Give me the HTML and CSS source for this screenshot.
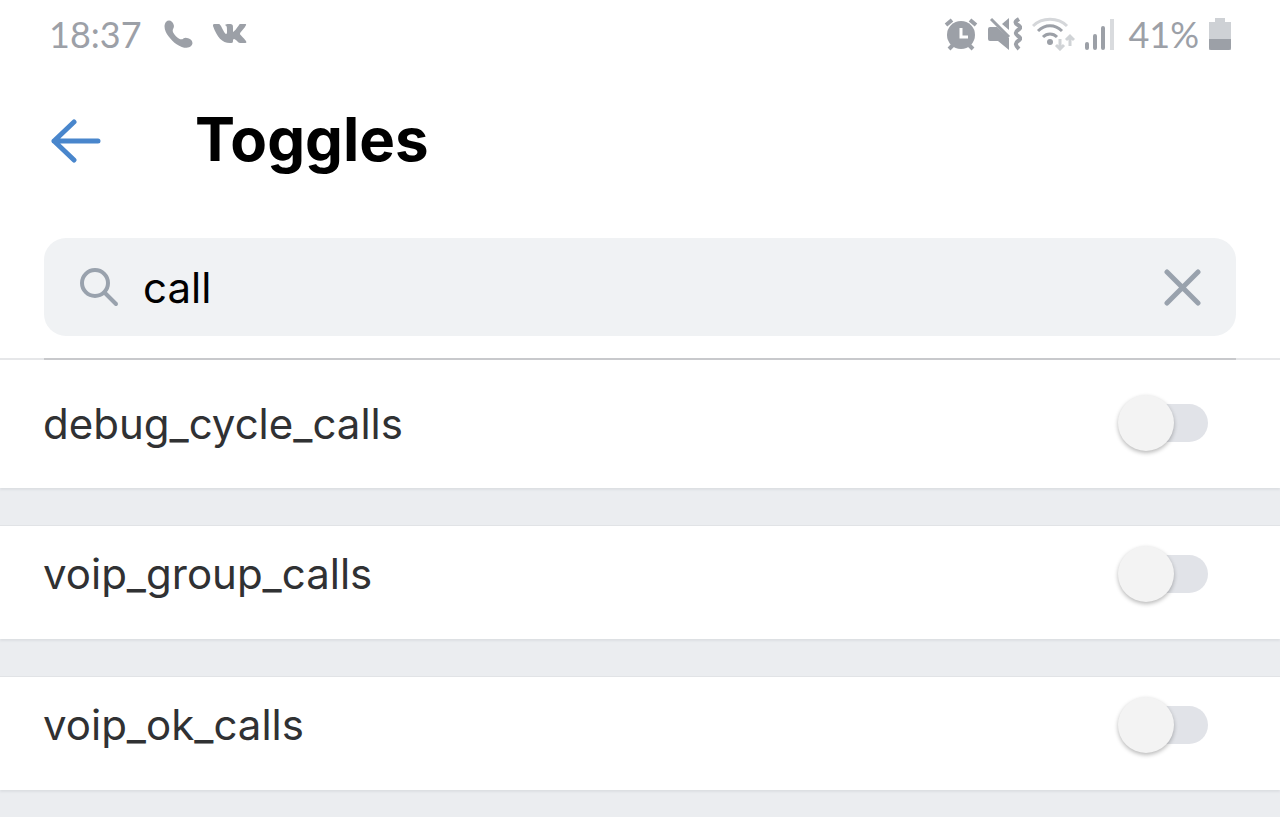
FILE: index.html
```html
<!DOCTYPE html>
<html lang="en">
<head>
  <meta charset="UTF-8">
  <meta name="viewport" content="width=device-width, initial-scale=1">
  <title>Toggles</title>
  <link rel="stylesheet" href="styles.css">
</head>
<body>
  <div class="status-bar">
    <div class="status-left">
      <span class="clock">18:37</span>
      <svg class="icon-phone" width="29" height="29" viewBox="0 0 30 30">
        <path d="M2 2C5-1 9 1 10 5c1 3-1 4-1 6 0 3 6 9 9 9 2 0 3-3 7-1 4 1 6 5 3 8-3 3-9 2-15-2C6 20-3 9 2 2z" fill="currentColor"/>
      </svg>
      <svg class="icon-vk" width="34" height="20" viewBox="0 0 34 20">
        <path d="M1 0h5c1 0 1 1 2 2 2 4 4 8 5 8 1 0 1-1 1-3 0-4 0-5-2-6 1-1 2-1 4-1 4 0 4 1 4 4v4c1 0 4-4 6-7 0-1 1-1 2-1h4c2 0 1 1 0 3-2 3-5 5-5 7 0 1 4 4 6 7 1 2 0 2-2 2h-4c-2 0-4-4-6-4-1 0-1 1-1 2 0 2-1 2-3 2C9 19 4 13 0 2c0-1 0-2 1-2z" fill="currentColor"/>
      </svg>
    </div>
    <div class="status-right">
      <svg width="34" height="34" viewBox="0 0 34 34">
        <circle cx="17" cy="18" r="14" fill="currentColor"/>
        <path d="M2 8l6-5M32 8l-6-5M5 32l5-5M29 32l-5-5" fill="none" stroke="currentColor" stroke-width="4"/>
        <path d="M17 11v9h7" fill="none" stroke="#fff" stroke-width="3"/>
      </svg>
      <svg width="34" height="34" viewBox="0 0 34 34">
        <path d="M0 12q0-2 2-2h7l12 11v12l-11-9H2q-2 0-2-2z" fill="currentColor"/>
        <path d="M3 2l18 18" stroke="currentColor" stroke-width="3"/>
        <path d="M21 1v12l-7-6z" fill="currentColor"/>
        <path d="M31 2c-5 3-4 4-1 6s3 3 0 5-3 4 0 6 3 3 0 5-3 4 1 8" fill="none" stroke="currentColor" stroke-width="4"/>
      </svg>
      <svg width="43" height="34" viewBox="0 0 43 34">
        <path d="M1 9C10 0 26 0 35 9" fill="none" stroke="#d5d7da" stroke-width="3"/>
        <path d="M6 14c7-7 17-7 24 0M11 20c4-4 10-4 14 0" fill="none" stroke="currentColor" stroke-width="3"/>
        <circle cx="18" cy="25" r="3" fill="currentColor"/>
        <path d="M28 22v10M24 28l4 4 4-4M38 29V19M34 23l4-4 4 4" fill="none" stroke="#d0d3d6" stroke-width="3"/>
      </svg>
      <svg class="icon-signal" width="29" height="34" viewBox="0 0 29 34">
        <path d="M2 27v4M10 19v12M18 11v20" stroke="currentColor" stroke-width="4" stroke-linecap="round"/>
        <path d="M27 2v31" stroke="#d9dbde" stroke-width="4"/>
      </svg>
      <span class="battery-text">41%</span>
      <svg class="icon-battery" width="22" height="34" viewBox="0 0 22 34">
        <path d="M6 1h10v4h6v28H0V5h6z" fill="#ced1d5"/>
        <path d="M0 22h22v9q0 2-2 2H2q-2 0-2-2z" fill="currentColor"/>
      </svg>
    </div>
  </div>

  <header class="header">
    <button class="back" type="button" aria-label="Back">
      <svg width="50" height="44" viewBox="0 0 50 44">
        <path d="M47 22H3M23 3L3 22l20 19" fill="none" stroke="currentColor" stroke-width="5" stroke-linecap="round" stroke-linejoin="round"/>
      </svg>
    </button>
    <h1 class="title">Toggles</h1>
  </header>

  <div class="search-wrap">
    <div class="search">
      <svg class="search-icon" width="40" height="40" viewBox="0 0 40 40">
        <circle cx="16" cy="16" r="13" fill="none" stroke="currentColor" stroke-width="4"/>
        <path d="M26 26l11 11" stroke="currentColor" stroke-width="4" stroke-linecap="round"/>
      </svg>
      <input class="search-input" type="text" value="call" aria-label="Search">
      <button class="clear" type="button" aria-label="Clear">
        <svg width="38" height="38" viewBox="0 0 38 38">
          <path d="M4 4l31 31M35 4L4 35" stroke="currentColor" stroke-width="5" stroke-linecap="round"/>
        </svg>
      </button>
    </div>
  </div>

  <main class="list">
    <div class="row">
      <label class="name" for="debug_cycle_calls">debug_cycle_calls</label>
      <input class="switch" type="checkbox" id="debug_cycle_calls">
    </div>
    <div class="row">
      <label class="name" for="voip_group_calls">voip_group_calls</label>
      <input class="switch" type="checkbox" id="voip_group_calls">
    </div>
    <div class="row">
      <label class="name" for="voip_ok_calls">voip_ok_calls</label>
      <input class="switch" type="checkbox" id="voip_ok_calls">
    </div>
  </main>
</body>
</html>
```
FILE: styles.css
```css
* {
  box-sizing: border-box;
}

body {
  margin: 0;
  min-height: 100vh;
  background-color: #ebedf0;
  font-family: Inter, "Open Sans", sans-serif;
  overflow-x: hidden;
}

svg {
  display: block;
  flex-shrink: 0;
}

button {
  padding: 0;
  border: none;
  background: none;
  cursor: pointer;
}

/* status bar */
.status-bar {
  display: flex;
  justify-content: space-between;
  align-items: center;
  height: 68px;
  padding: 0 49px;
  background-color: #fff;
  color: #9ca0a7;
  font-family: Lato, sans-serif;
  font-size: 36px;
}

.status-left,
.status-right {
  display: flex;
  align-items: center;
}

.icon-phone {
  margin-left: 22px;
}

.icon-vk {
  margin-left: 20px;
}

.status-right {
  gap: 10px;
}

.icon-signal {
  margin-right: 4px;
}

/* header */
.header {
  display: flex;
  align-items: center;
  height: 146px;
  padding: 0 51px;
  background-color: #fff;
}

.back {
  color: #4986cc;
}

.title {
  margin: 0 0 0 94px;
  padding-bottom: 4px;
  font-size: 60px;
  font-weight: 700;
  line-height: 72px;
}

/* search */
.search-wrap {
  padding: 24px 44px 22px;
  background-color: #fff;
}

.search {
  display: flex;
  align-items: center;
  gap: 24px;
  height: 98px;
  padding: 0 35px;
  border-radius: 22px;
  background-color: #f0f2f4;
  color: #99a2ad;
}

.search-input {
  flex: 1;
  min-width: 0;
  padding: 0;
  border: none;
  outline: none;
  background: none;
  color: #000;
  font-family: inherit;
  font-size: 42px;
}

.clear {
  color: #99a2ad;
}

/* list */
.list::before {
  content: "";
  display: block;
  height: 2px;
  background: linear-gradient(#c8c9cc, #c8c9cc) center / calc(100% - 88px) 100% no-repeat #e6e7e9;
}

.row {
  display: flex;
  justify-content: space-between;
  align-items: center;
  height: 113px;
  margin-bottom: 38px;
  padding: 0 72px 18px 43px;
  background-color: #fff;
  box-shadow: 0 2px 2px #dcdfe3, 0 -1px 0 #e1e3e6;
}

.row:first-child {
  height: 128px;
  padding-top: 16px;
  box-shadow: 0 2px 2px #dcdfe3;
}

.name {
  color: #303133;
  font-size: 42px;
}

.switch {
  appearance: none;
  position: relative;
  flex-shrink: 0;
  width: 90px;
  height: 56px;
  margin: 0;
  cursor: pointer;
}

.switch::before {
  content: "";
  position: absolute;
  inset: 9px 0 9px 10px;
  border-radius: 19px;
  background-color: #e1e3e8;
}

.switch::after {
  content: "";
  position: absolute;
  top: 0;
  left: 0;
  width: 56px;
  height: 56px;
  border-radius: 50%;
  background-color: #f3f3f3;
  box-shadow: 0 2px 4px rgba(0, 0, 0, 0.28);
}

.switch:checked::before {
  background-color: #a4c3e6;
}

.switch:checked::after {
  left: 34px;
  background-color: #4986cc;
}
```
